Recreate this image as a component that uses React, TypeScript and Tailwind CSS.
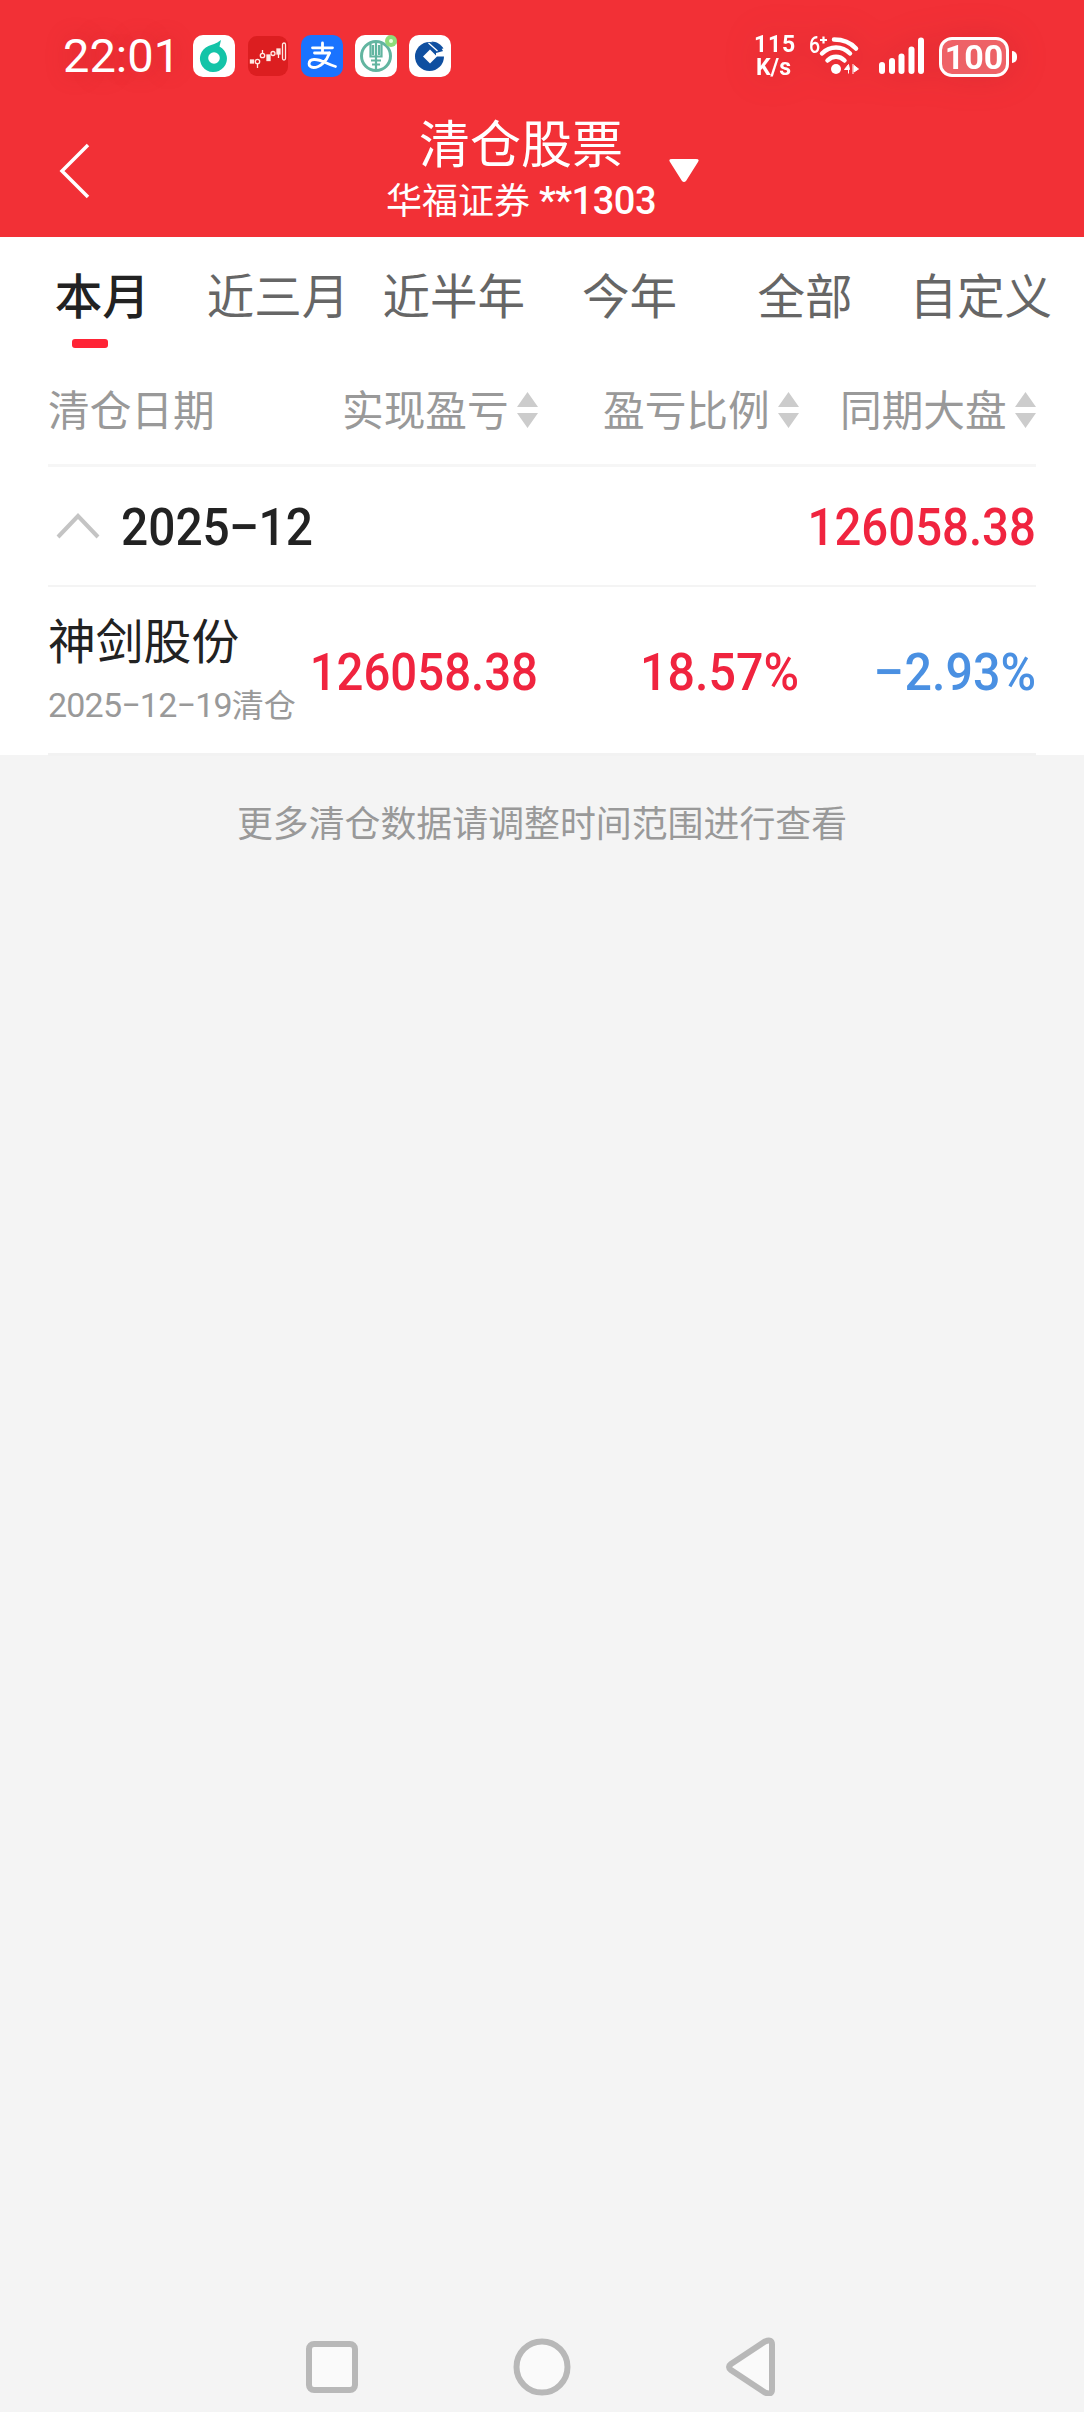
import clsx from "clsx";

const TABS = ["本月", "近三月", "近半年", "今年", "全部", "自定义"];

function AppIcons() {
  return (
    <div className="ml-[20px] flex gap-[12px]">
      <svg width="42" height="42" viewBox="0 0 42 42">
        <rect width="42" height="42" rx="10" fill="#fff" />
        <path d="M28 5 26.500 11.500a13.500 13.500 0 1 1-11-.5C19 9.500 23 9 28 5Z" fill="#14c4a8" />
        <circle cx="21" cy="23" r="5.800" fill="#fff" />
      </svg>
      <svg width="42" height="42" viewBox="0 0 42 42">
        <rect x="1" y="1" width="40" height="40" rx="9" fill="#dc1e20" />
        <g fill="none" stroke="#ffe9e4" strokeWidth="1.3">
          <rect x="3.500" y="25" width="3" height="3" fill="#ffe9e4" />
          <circle cx="10.500" cy="26.500" r="2.200" />
          <path d="M10.500 29v4M15.500 15v3" />
          <circle cx="15.500" cy="20.500" r="2.200" />
          <rect x="20" y="20" width="3" height="5.500" fill="#ffe9e4" />
          <circle cx="26" cy="18.500" r="2" />
          <rect x="30" y="14" width="3" height="5" fill="#ffe9e4" />
          <path d="M31.500 19v4" />
          <rect x="35.500" y="8" width="3" height="17" rx="1.500" />
        </g>
      </svg>
      <svg width="42" height="42" viewBox="0 0 42 42">
        <rect width="42" height="42" rx="10" fill="#1a73ff" />
        <g fill="none" stroke="#fff" strokeWidth="2.800" strokeLinecap="round" strokeLinejoin="round">
          <path d="M11.500 12.800h20M21.500 8v10M13.500 18h15" />
          <path d="M28.500 18C25.500 26.500 19 32.500 12.500 32.500c-6 0-6-7.500.5-8 7-.5 13 5 21.500 7" />
        </g>
      </svg>
      <svg width="42" height="42" viewBox="0 0 42 42">
        <rect width="42" height="42" rx="10" fill="#fff" />
        <circle cx="21" cy="21" r="14.500" fill="none" stroke="#62b5a0" strokeWidth="3" />
        <path
          d="M15.500 9v12.500h11V9M21 6v30M16 25.500h10M17 29.500h8M18 10v10M24 10v10"
          fill="none"
          stroke="#62b5a0"
          strokeWidth="2.200"
        />
        <circle cx="36" cy="6" r="6" fill="#8fdc7a" />
        <circle cx="36" cy="6" r="2" fill="#eaffdf" />
      </svg>
      <svg width="42" height="42" viewBox="0 0 42 42">
        <rect width="42" height="42" rx="10" fill="#fff" />
        <circle cx="20.500" cy="21.500" r="14.500" fill="#0f4fa0" />
        <path d="m21 14.500 7 7-7 7-7-7Z" fill="#fff" />
        <path d="M27 18 38 15v6.500H27Z" fill="#fff" />
        <path d="M22.500 6.500c5 0 9.500 2.800 12 7l-5.500 1Z" fill="#0f4fa0" />
        <path d="m19.500 8 9 8" stroke="#fff" strokeWidth="1.300" />
      </svg>
    </div>
  );
}

function StatusBar() {
  return (
    <div className="flex h-[112px] items-center pl-[63px] text-white">
      <span className="w-[110px] text-[47px] leading-[46px] [text-shadow:0_0_24px_rgba(150,30,40,0.3)]">22:01</span>
      <AppIcons />
      <div className="ml-[303px] flex items-center drop-shadow-[0_0_16px_rgba(150,30,40,0.3)]">
        <div className="w-[44px] text-[23px] leading-[23px] font-bold">
          <p className="tracking-[0.8px]">115</p>
          <p className="pl-[2px]">K/s</p>
        </div>
        <div className="ml-[10px] flex h-[44px] w-[56px]">
          <span className="-mt-[2px] w-[12px] scale-x-85 text-[23px] leading-[28px] font-medium">6</span>
          <svg className="overflow-visible" width="44" height="44" viewBox="12 0 44 44">
            <path d="M12 6h7M15.500 2.500v7" stroke="#fff" strokeWidth="2.200" />
            <g fill="none" stroke="#fff" strokeWidth="4.500" strokeLinecap="round">
              <path d="M26 5.500c9 0 17 3.500 22 9" />
              <path d="M14 19.500c8-8 20-8 28 0" />
              <path d="M19.500 26.500c5-5 12-5 17 0" />
            </g>
            <circle cx="28" cy="35" r="5" fill="#fff" />
            <path d="m40.500 30.500-4 5h5Zm0 5v4M45 30v10M46 31.500l4.500 3.500-4.500 3Z" fill="#fff" stroke="#fff" strokeWidth="1" />
          </svg>
        </div>
        <svg className="ml-[15px]" width="48" height="40" viewBox="0 0 48 40" fill="#fff">
          <rect x="0" y="26" width="6" height="12" rx="3" />
          <rect x="10" y="22" width="6" height="16" rx="3" />
          <rect x="19.500" y="17.500" width="6" height="20.500" rx="3" />
          <rect x="29.500" y="10.500" width="6" height="27.500" rx="3" />
          <rect x="39" y="1.500" width="6" height="36.500" rx="3" />
        </svg>
        <div className="mt-[1px] ml-[12px] flex h-[40px] w-[70px] items-center justify-center rounded-[13px] border-3 border-white bg-white/25 text-[34px] leading-[34px] font-bold">
          100
        </div>
        <i className="mt-[2px] ml-[3px] h-[12px] w-[5px] rounded-r-full bg-white" />
      </div>
    </div>
  );
}

function TitleBar() {
  return (
    <div className="flex h-[125px] pl-[58px] text-white">
      <svg className="mt-[31px]" width="32" height="56" viewBox="0 0 32 56">
        <path d="M30 2 4 28l26 26" fill="none" stroke="#fff" strokeWidth="3.500" />
      </svg>
      <div className="ml-[281px] flex w-[300px] flex-col items-center">
        <h1 className="mt-[4px] text-[51px] leading-[60px]">清仓股票</h1>
        <p className="text-[36px] leading-[50px] whitespace-nowrap">
          华福证券 <span className="text-[38px] font-medium tracking-[-0.500px]">**1303</span>
        </p>
      </div>
      <svg className="mt-[46px] -ml-[2px]" width="30" height="25" viewBox="0 0 30 25">
        <path d="M3 1h24q4 0 2 3L17 23q-2 2-4 0L1 4q-2-3 2-3Z" fill="#fff" />
      </svg>
    </div>
  );
}

function Sorter() {
  return (
    <svg className="mt-[2px] ml-[8px] shrink-0" width="21" height="36" viewBox="0 0 21 36" fill="#ccc">
      <path d="M10.500 0 21 15H0ZM0 21h21L10.500 36Z" />
    </svg>
  );
}

function ColumnHead({ label, className }: { label: string; className?: string }) {
  return (
    <div className={clsx("flex shrink-0 items-center whitespace-nowrap", className)}>
      <span className="mt-[5px]">{label}</span>
      <Sorter />
    </div>
  );
}

export default function App() {
  return (
    <div className="flex h-[2412px] w-[1084px] flex-col overflow-hidden bg-[#f4f4f4] font-[Roboto,'Noto_Sans_CJK_SC',sans-serif]">
      <header className="h-[237px] bg-[#f23036]">
        <StatusBar />
        <TitleBar />
      </header>

      <main className="h-[518px] bg-white">
        <nav className="flex h-[118px] px-[14.500px] text-[47.500px] text-[#666]">
          {TABS.map((tab, i) => (
            <div
              key={tab}
              className={clsx(
                "relative flex w-[175.700px] shrink-0 justify-center pt-[26px] leading-[70px]",
                i === 0 && "font-medium text-[#222]"
              )}
            >
              {tab}
              {i === 0 && <i className="absolute top-[102px] left-[57.500px] h-[9px] w-[36px] rounded-[3px] bg-[#ff2436]" />}
            </div>
          ))}
        </nav>

        <div className="mx-[48px]">
          <div className="flex h-[112px] items-center border-b-3 border-[#f6f6f6] text-[41.700px] text-[#999]">
            <span className="mt-[5px] w-[294px] shrink-0">清仓日期</span>
            <ColumnHead label="实现盈亏" className="w-[261px]" />
            <ColumnHead label="盈亏比例" className="w-[237px]" />
            <ColumnHead label="同期大盘" />
          </div>

          <div className="flex h-[120px] items-center border-b-2 border-[#f4f4f4] text-[52px] font-medium">
            <svg className="ml-[8px]" width="44" height="26" viewBox="0 0 44 26">
              <path d="M2 24 22 3l20 21" fill="none" stroke="#c4c4c4" strokeWidth="4" />
            </svg>
            <span className="mt-[4px] ml-[21px] origin-left scale-x-92 text-[#222]">
              2025<span className="mx-[1px] inline-block scale-x-115">−</span>12
            </span>
            <span className="mt-[4px] ml-auto origin-right scale-x-91 text-[#f0243f]">126058.38</span>
          </div>

          <div className="flex h-[169px] items-center border-b-3 border-[#f2f2f2]">
            <div className="mt-[6px] w-[262px]">
              <p className="text-[47.800px] leading-[64px] text-[#222]">神剑股份</p>
              <p className="text-[34px] leading-[60px] tracking-[-0.800px] whitespace-nowrap text-[#999]">
                2025−12−19<span className="text-[32px] tracking-normal">清仓</span>
              </p>
            </div>
            <div className="mt-[5px] flex text-[52px] font-medium text-[#f0243f]">
              <span className="flex w-[228px] origin-right scale-x-91 justify-end">126058.38</span>
              <span className="w-[261px] origin-right scale-x-93 text-right">18.57%</span>
              <span className="w-[237px] origin-right scale-x-93 text-right text-[#4a90e2]">
                <span className="mr-[2px] inline-block scale-x-115">−</span>2.93%
              </span>
            </div>
          </div>
        </div>
      </main>

      <p className="mt-[43px] text-center text-[35.900px] leading-[54px] text-[#999]">
        更多清仓数据请调整时间范围进行查看
      </p>

      <footer className="mt-auto flex h-[90px] justify-center gap-[152px] pt-[14px]">
        <svg width="60" height="60" viewBox="0 0 60 60" fill="#fafafa" stroke="#b8b8b8" strokeWidth="6">
          <rect x="9" y="8" width="46" height="46" rx="5" />
        </svg>
        <svg width="60" height="60" viewBox="0 0 60 60" fill="#fafafa" stroke="#b8b8b8" strokeWidth="6">
          <circle cx="30" cy="31" r="25.500" />
        </svg>
        <svg width="60" height="60" viewBox="0 0 60 60" fill="#fafafa" stroke="#b8b8b8" strokeWidth="6">
          <path d="M7 28 41 5.500q7-3 7 3v45q0 6-7 3L7 34q-4-3 0-6Z" />
        </svg>
      </footer>
    </div>
  );
}
